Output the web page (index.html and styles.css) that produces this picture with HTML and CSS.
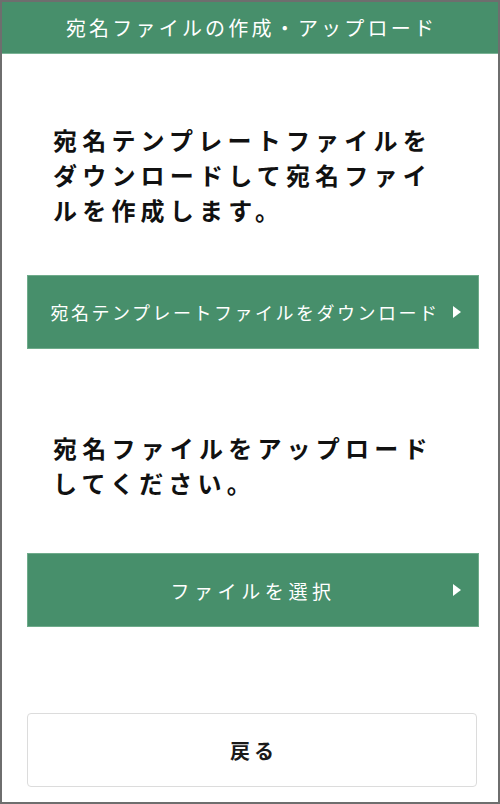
FILE: index.html
```html
<!DOCTYPE html>
<html lang="ja">
<head>
<meta charset="utf-8">
<title>宛名ファイルの作成・アップロード</title>
<link rel="stylesheet" href="styles.css">
</head>
<body>
<div class="frame">
  <header class="header">宛名ファイルの作成・アップロード</header>
  <main class="main">
    <h2 class="lead lead-first">宛名テンプレートファイルをダウンロードして宛名ファイルを作成します。</h2>
    <a class="btn btn-green btn-download" href="#">宛名テンプレートファイルをダウンロード</a>
    <h2 class="lead lead-second">宛名ファイルをアップロードしてください。</h2>
    <a class="btn btn-green btn-select" href="#">ファイルを選択</a>
    <a class="btn btn-back" href="#">戻る</a>
  </main>
</div>
</body>
</html>
```
FILE: styles.css
```css
* { box-sizing: border-box; }
html, body { margin: 0; padding: 0; background: #fff; }
body {
  font-family: "Noto Sans CJK JP", "Noto Sans", sans-serif;
  width: 500px;
  height: 804px;
}
.frame {
  width: 500px;
  height: 804px;
  border: 2px solid #6e6e6e;
  display: flex;
  flex-direction: column;
  background: #fff;
}
.header {
  height: 52px;
  background: #478f6b;
  border-bottom: 1px solid #7ab395;
  color: #fff;
  font-size: 20px;
  letter-spacing: 3.2px;
  display: flex;
  align-items: center;
  justify-content: center;
  padding-left: 3px;
}
.main {
  display: flex;
  flex-direction: column;
  padding: 0 19px 0 25px;
}
.lead {
  margin: 0;
  padding: 0 30px 0 26px;
  font-size: 24px;
  font-weight: 700;
  line-height: 35px;
  letter-spacing: 5.2px;
  color: #111;
}
.lead-first { margin-top: 68px; }
.lead-second { margin-top: 81px; }
.btn {
  display: flex;
  align-items: center;
  justify-content: center;
  height: 74px;
  text-decoration: none;
  position: relative;
}
.btn-green {
  background: #478f6b;
  border: 1px solid #6fab8b;
  color: #fff;
}
.btn-green::after {
  content: "";
  position: absolute;
  right: 17px;
  top: 50%;
  margin-top: -6px;
  border-left: 8px solid #fff;
  border-top: 6.5px solid transparent;
  border-bottom: 6.5px solid transparent;
}
.btn-download {
  margin-top: 48px;
  font-size: 18px;
  letter-spacing: 2.5px;
  padding-right: 16px;
}
.btn-select {
  margin-top: 53px;
  font-size: 19px;
  letter-spacing: 4.6px;
}
.btn-back {
  margin-top: 86px;
  margin-right: 2px;
  border: 1px solid #dcdcdc;
  border-radius: 4px;
  color: #1a1a1a;
  font-size: 20px;
  font-weight: 700;
  letter-spacing: 4px;
  padding-left: 4px;
}
```
